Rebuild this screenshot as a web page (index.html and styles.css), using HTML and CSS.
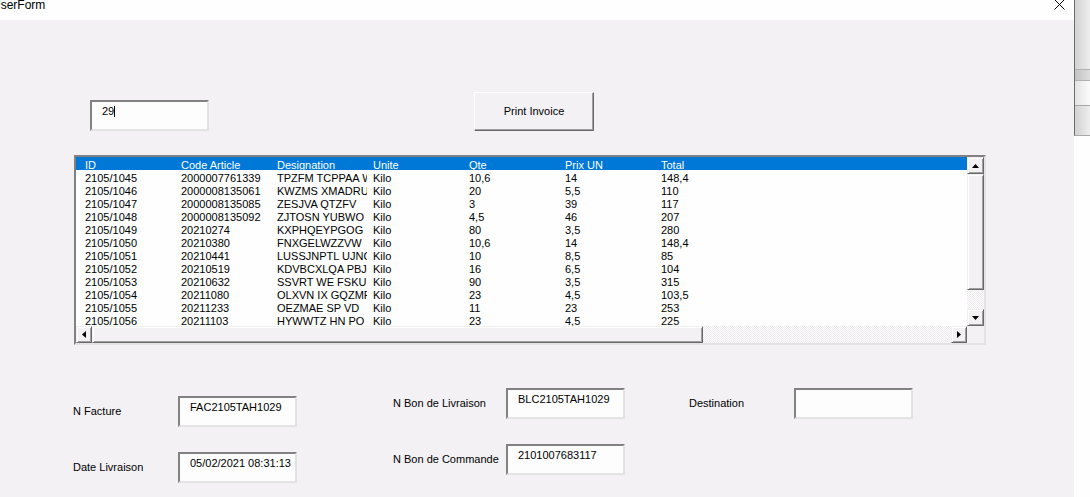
FILE: index.html
```html
<!DOCTYPE html>
<html>
<head>
<meta charset="utf-8">
<link rel="stylesheet" href="styles.css">
</head>
<body>
<div class="screen">
  <div class="window">
    <div class="titlebar">
      <span class="title">UserForm</span>
      <svg class="close" width="11" height="10" viewBox="0 0 11 10"><path d="M0.5 -0.5 L10.5 9.5 M10.5 -0.5 L0.5 9.5" stroke="#000" stroke-width="1" fill="none"/></svg>
    </div>
    <div class="form">
      <div class="toprow">
        <div class="textbox tb-id"><span>29</span><span class="caret"></span></div>
        <div class="button">Print Invoice</div>
      </div>
      <div class="listbox">
        <div class="lb-main">
          <div class="lb-rows">
            <div class="row head"><span>ID</span><span>Code Article</span><span>Designation</span><span>Unite</span><span>Qte</span><span>Prix UN</span><span>Total</span></div>
            <div class="row"><span>2105/1045</span><span>2000007761339</span><span>TPZFM TCPPAA WQR</span><span>Kilo</span><span>10,6</span><span>14</span><span>148,4</span></div>
            <div class="row"><span>2105/1046</span><span>2000008135061</span><span>KWZMS XMADRU YTR</span><span>Kilo</span><span>20</span><span>5,5</span><span>110</span></div>
            <div class="row"><span>2105/1047</span><span>2000008135085</span><span>ZESJVA QTZFV</span><span>Kilo</span><span>3</span><span>39</span><span>117</span></div>
            <div class="row"><span>2105/1048</span><span>2000008135092</span><span>ZJTOSN YUBWO</span><span>Kilo</span><span>4,5</span><span>46</span><span>207</span></div>
            <div class="row"><span>2105/1049</span><span>20210274</span><span>KXPHQEYPGOG  YIK</span><span>Kilo</span><span>80</span><span>3,5</span><span>280</span></div>
            <div class="row"><span>2105/1050</span><span>20210380</span><span>FNXGELWZZVW  VBN</span><span>Kilo</span><span>10,6</span><span>14</span><span>148,4</span></div>
            <div class="row"><span>2105/1051</span><span>20210441</span><span>LUSSJNPTL UJNOKL</span><span>Kilo</span><span>10</span><span>8,5</span><span>85</span></div>
            <div class="row"><span>2105/1052</span><span>20210519</span><span>KDVBCXLQA PBJMQ</span><span>Kilo</span><span>16</span><span>6,5</span><span>104</span></div>
            <div class="row"><span>2105/1053</span><span>20210632</span><span>SSVRT WE FSKUI UX</span><span>Kilo</span><span>90</span><span>3,5</span><span>315</span></div>
            <div class="row"><span>2105/1054</span><span>20211080</span><span>OLXVN IX GQZMR</span><span>Kilo</span><span>23</span><span>4,5</span><span>103,5</span></div>
            <div class="row"><span>2105/1055</span><span>20211233</span><span>OEZMAE SP VD</span><span>Kilo</span><span>11</span><span>23</span><span>253</span></div>
            <div class="row"><span>2105/1056</span><span>20211103</span><span>HYWWTZ HN PO</span><span>Kilo</span><span>23</span><span>4,5</span><span>225</span></div>
          </div>
          <div class="vscroll">
            <div class="sbtn"><svg width="7" height="4" viewBox="0 0 7 4"><path d="M3.5 0 L7 4 L0 4 Z" fill="#000"/></svg></div>
            <div class="raised vthumb"></div>
            <div class="track vtrack"></div>
            <div class="sbtn"><svg width="7" height="4" viewBox="0 0 7 4"><path d="M0 0 L7 0 L3.5 4 Z" fill="#000"/></svg></div>
          </div>
        </div>
        <div class="hscroll">
          <div class="sbtn hbtn"><svg width="4" height="7" viewBox="0 0 4 7"><path d="M0 3.5 L4 0 L4 7 Z" fill="#000"/></svg></div>
          <div class="raised hthumb"></div>
          <div class="track htrack"></div>
          <div class="sbtn hbtn"><svg width="4" height="7" viewBox="0 0 4 7"><path d="M0 0 L4 3.5 L0 7 Z" fill="#000"/></svg></div>
          <div class="corner"></div>
        </div>
      </div>
      <div class="fields">
        <div class="col col1">
          <div class="field"><span class="label l1">N Facture</span><div class="textbox">FAC2105TAH1029</div></div>
          <div class="field"><span class="label l1">Date Livraison</span><div class="textbox">05/02/2021 08:31:13</div></div>
        </div>
        <div class="col col2">
          <div class="field"><span class="label l2">N Bon de Livraison</span><div class="textbox">BLC2105TAH1029</div></div>
          <div class="field"><span class="label l2">N Bon de Commande</span><div class="textbox">2101007683117</div></div>
        </div>
        <div class="col col3">
          <div class="field"><span class="label l3">Destination</span><div class="textbox"></div></div>
        </div>
      </div>
    </div>
  </div>
  <div class="behind">
    <div class="behind-top">
      <div class="seg s1"></div>
      <div class="seg s2"></div>
      <div class="seg s3"></div>
      <div class="seg s4"></div>
    </div>
  </div>
</div>
</body>
</html>
```

FILE: styles.css
```css
html, body {
  margin: 0;
  padding: 0;
}
body {
  font-family: "Liberation Sans", Arial, sans-serif;
  font-size: 11px;
  color: #000;
  background: #fdfefd;
}
.screen {
  display: flex;
  width: 1090px;
  height: 497px;
  overflow: hidden;
}
.window {
  width: 1074px;
  flex: none;
  display: flex;
  flex-direction: column;
}
.titlebar {
  height: 20px;
  flex: none;
  background: #fdfefd;
  display: flex;
  justify-content: space-between;
  align-items: flex-start;
  overflow: hidden;
}
.title {
  font-size: 12px;
  line-height: 14px;
  margin-top: -2px;
  margin-left: -8px;
}
.close {
  margin-right: 9px;
  display: block;
}
.form {
  flex: 1;
  background: #f3f1f4;
  padding-top: 72px;
}
.toprow {
  display: flex;
  align-items: flex-start;
  padding-left: 90px;
}
.textbox {
  width: 119px;
  height: 31px;
  flex: none;
  box-sizing: border-box;
  background: #fcfdfc;
  border: 2px solid;
  border-color: #828282 #e3e3e3 #e3e3e3 #828282;
  padding: 3px 0 0 10px;
  line-height: 13px;
  white-space: nowrap;
  overflow: hidden;
}
.tb-id {
  margin-top: 8px;
  display: flex;
  align-items: flex-start;
}
.caret {
  display: block;
  width: 1px;
  height: 11px;
  background: #000;
  margin-top: 1px;
}
.button {
  margin-left: 265px;
  width: 120px;
  height: 39px;
  box-sizing: border-box;
  border: 1px solid;
  border-color: #ffffff #696969 #696969 #ffffff;
  box-shadow: inset -1px -1px 0 #a0a0a0;
  background: #f3f1f4;
  display: flex;
  align-items: center;
  justify-content: center;
  line-height: 13px;
}
.listbox {
  margin: 24px 0 0 74px;
  width: 912px;
  height: 190px;
  box-sizing: border-box;
  border: 2px solid;
  border-color: #828282 #e3e3e3 #e3e3e3 #828282;
  background: #fdfefd;
  display: flex;
  flex-direction: column;
}
.lb-main {
  display: flex;
  height: 169px;
  flex: none;
}
.lb-rows {
  width: 891px;
  flex: none;
}
.row {
  display: flex;
  height: 13px;
  box-sizing: border-box;
  padding: 2px 0 0 9px;
  line-height: 13px;
}
.row span {
  flex: none;
  width: 90px;
  margin-right: 6px;
  white-space: pre;
  overflow-x: clip;
}
.row.head {
  background: #0078d7;
  color: #fff;
}
.vscroll {
  width: 17px;
  flex: none;
  display: flex;
  flex-direction: column;
}
.sbtn,
.raised {
  box-sizing: border-box;
  background: #f3f1f4;
  border: 1px solid;
  border-color: #f0f0f0 #696969 #696969 #f0f0f0;
  box-shadow: inset 1px 1px 0 #ffffff, inset -1px -1px 0 #a0a0a0;
}
.sbtn {
  width: 17px;
  height: 17px;
  flex: none;
  display: flex;
  align-items: center;
  justify-content: center;
}
.sbtn svg {
  display: block;
}
.vthumb {
  height: 116px;
  flex: none;
}
.track {
  background-color: #ffffff;
  background-image: repeating-conic-gradient(#eceaed 0 25%, #ffffff 0 50%);
  background-size: 2px 2px;
}
.vtrack {
  flex: 1;
}
.hscroll {
  display: flex;
  height: 17px;
  flex: none;
}
.hbtn {
  width: 16px;
}
.hthumb {
  width: 611px;
  flex: none;
}
.htrack {
  flex: 1;
}
.corner {
  width: 17px;
  flex: none;
  background: #f3f1f4;
}
.fields {
  display: flex;
  align-items: flex-start;
  margin: 43px 0 0 73px;
}
.col {
  display: flex;
  flex-direction: column;
  gap: 25px;
}
.col1 {
  padding-top: 8px;
}
.col2 {
  margin-left: 96px;
}
.col3 {
  margin-left: 64px;
}
.field {
  display: flex;
  align-items: center;
}
.label {
  line-height: 13px;
  white-space: nowrap;
  flex: none;
}
.l1 { width: 105px; }
.l2 { width: 113px; }
.l3 { width: 105px; }
.behind {
  flex: 1;
  display: flex;
  flex-direction: column;
  background: #fdfefd;
}
.behind-top {
  height: 136px;
  box-sizing: border-box;
  border-left: 1px solid #6d6d6d;
  border-bottom: 1px solid #a8a8a8;
  display: flex;
  flex-direction: column;
}
.seg {
  background: linear-gradient(to right, #d2d2d2, #eeeeee);
}
.s1 { height: 69px; }
.s2 {
  height: 11px;
  box-sizing: border-box;
  border-top: 1px solid #b0b0b0;
  background: linear-gradient(to right, #c4c4c4, #dedede);
}
.s3 {
  height: 25px;
  box-sizing: border-box;
  border-top: 1px solid #b0b0b0;
  background: linear-gradient(to right, #e4e4e4, #fbfbfb);
}
.s4 {
  flex: 1;
  box-sizing: border-box;
  border-top: 1px solid #a8a8a8;
}
```
